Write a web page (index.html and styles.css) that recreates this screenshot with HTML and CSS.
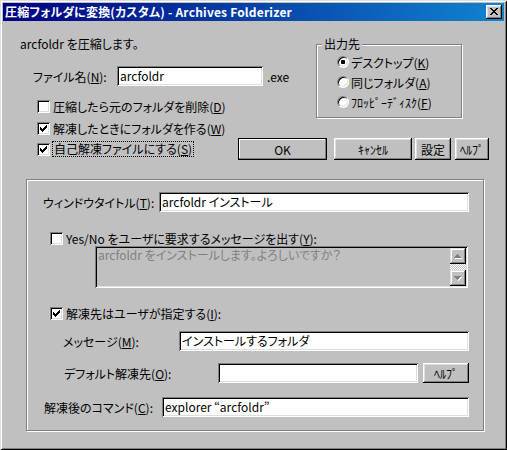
FILE: index.html
```html
<!DOCTYPE html>
<html lang="ja">
<head>
<meta charset="utf-8">
<title>圧縮フォルダに変換(カスタム) - Archives Folderizer</title>
<link rel="stylesheet" href="styles.css">
</head>
<body>
<div class="window">
  <div class="titlebar">
    <span class="title">圧縮フォルダに変換(カスタム) - Archives Folderizer</span>
    <span class="close"><svg width="8" height="7" viewBox="0 0 8 7" shape-rendering="crispEdges"><path fill="#000" d="M0 0h2v1H0zM6 0h2v1H6zM1 1h2v1H1zM5 1h2v1H5zM2 2h4v1H2zM3 3h2v1H3zM2 4h4v1H2zM1 5h2v1H1zM5 5h2v1H5zM0 6h2v1H0zM6 6h2v1H6z"/></svg></span>
  </div>
  <div class="content">
    <div class="top">
      <div class="intro">arcfoldr を圧縮します。</div>
      <div class="filename">
        <span class="fn-label">ファイル名(<u>N</u>):</span>
        <span class="field fn-field">arcfoldr</span>
        <span class="ext">.exe</span>
      </div>
      <fieldset class="dest">
        <legend>出力先</legend>
        <div class="radio-row"><span class="radio on"></span><span>デスクトップ(<u>K</u>)</span></div>
        <div class="radio-row"><span class="radio"></span><span>同じフォルダ(<u>A</u>)</span></div>
        <div class="radio-row"><span class="radio"></span><span>ﾌﾛｯﾋﾟｰﾃﾞｨｽｸ(<u>F</u>)</span></div>
      </fieldset>
      <div class="check cb1"><span class="cbox"></span><span>圧縮したら元のフォルダを削除(<u>D</u>)</span></div>
      <div class="check cb2"><span class="cbox"><svg width="13" height="13" viewBox="0 0 13 13" shape-rendering="crispEdges"><path fill="#000" d="M3 5h1v3H3zM4 6h1v3H4zM5 7h1v3H5zM6 6h1v3H6zM7 5h1v3H7zM8 4h1v3H8zM9 3h1v3H9z"/></svg></span><span>解凍したときにフォルダを作る(<u>W</u>)</span></div>
      <div class="check cb3"><span class="cbox"><svg width="13" height="13" viewBox="0 0 13 13" shape-rendering="crispEdges"><path fill="#000" d="M3 5h1v3H3zM4 6h1v3H4zM5 7h1v3H5zM6 6h1v3H6zM7 5h1v3H7zM8 4h1v3H8zM9 3h1v3H9z"/></svg></span><span class="focus">自己解凍ファイルにする(<u>S</u>)</span></div>
      <div class="buttons">
        <span class="btn default b-ok">OK</span>
        <span class="btn b-cancel">ｷｬﾝｾﾙ</span>
        <span class="btn b-set">設定</span>
        <span class="btn b-help">ﾍﾙﾌﾟ</span>
      </div>
    </div>

    <div class="group">
      <div class="frow r-title">
        <span>ウィンドウタイトル(<u>T</u>):</span>
        <span class="field">arcfoldr インストール</span>
      </div>
      <div class="check cb-yes"><span class="cbox"></span><span>Yes/No をユーザに要求するメッセージを出す(<u>Y</u>):</span></div>
      <div class="memo">
        <div class="memo-text">arcfoldr をインストールします。よろしいですか？</div>
        <div class="vscroll">
          <span class="sbtn"><svg width="8" height="5" viewBox="0 0 8 5" shape-rendering="crispEdges"><path fill="#fff" d="M4 1h1v1H4zM3 2h3v1H3zM2 3h5v1H2zM1 4h7v1H1z"/><path fill="#808080" d="M3 0h1v1H3zM2 1h3v1H2zM1 2h5v1H1zM0 3h7v1H0z"/></svg></span>
          <span class="track"></span>
          <span class="sbtn"><svg width="8" height="5" viewBox="0 0 8 5" shape-rendering="crispEdges"><path fill="#fff" d="M1 1h7v1H1zM2 2h5v1H2zM3 3h3v1H3zM4 4h1v1H4z"/><path fill="#808080" d="M0 0h7v1H0zM1 1h5v1H1zM2 2h3v1H2zM3 3h1v1H3z"/></svg></span>
        </div>
      </div>
      <div class="check cb-dest"><span class="cbox"><svg width="13" height="13" viewBox="0 0 13 13" shape-rendering="crispEdges"><path fill="#000" d="M3 5h1v3H3zM4 6h1v3H4zM5 7h1v3H5zM6 6h1v3H6zM7 5h1v3H7zM8 4h1v3H8zM9 3h1v3H9z"/></svg></span><span>解凍先はユーザが指定する(<u>I</u>):</span></div>
      <div class="frow r-msg">
        <span>メッセージ(<u>M</u>):</span>
        <span class="field">インストールするフォルダ</span>
      </div>
      <div class="frow r-def">
        <span>デフォルト解凍先(<u>O</u>):</span>
        <span class="field def-field"></span>
        <span class="btn b-help2">ﾍﾙﾌﾟ</span>
      </div>
      <div class="frow r-cmd">
        <span>解凍後のコマンド(<u>C</u>):</span>
        <span class="field">explorer “arcfoldr”</span>
      </div>
    </div>
  </div>
</div>
</body>
</html>
```

FILE: styles.css
```css
* { box-sizing: border-box; }
html, body { margin: 0; padding: 0; }
body {
  width: 507px;
  height: 450px;
  background: #c0c0c0;
  font-family: "Noto Sans CJK JP", "Noto Sans", sans-serif;
  font-size: 12px;
  font-feature-settings: "palt";
  color: #000;
  overflow: hidden;
}
u { text-decoration: underline; text-underline-offset: 1px; }

.window {
  width: 507px;
  height: 450px;
  padding: 3px;
  background: #c0c0c0;
  box-shadow: inset 1px 1px #dfdfdf, inset -1px -1px #000, inset 2px 2px #fff, inset -2px -2px #808080;
  display: flex;
  flex-direction: column;
}

.titlebar {
  height: 18px;
  background: linear-gradient(to right, #000080, #1084d0);
  display: flex;
  align-items: center;
  justify-content: space-between;
  padding: 0 2px 0 2px;
}
.title {
  color: #fff;
  font-weight: bold;
  line-height: 18px;
  white-space: nowrap;
  letter-spacing: 0.2px;
}
.close {
  width: 16px;
  height: 14px;
  background: #c0c0c0;
  box-shadow: inset -1px -1px #000, inset 1px 1px #fff, inset -2px -2px #808080, inset 2px 2px #dfdfdf;
  display: flex;
  align-items: center;
  justify-content: center;
  padding-right: 1px;
  padding-bottom: 1px;
}
.close svg { display: block; }

.content {
  padding: 15px 0 0 17px;
}

.top {
  display: grid;
  grid-template-columns: 219px 77px 173px;
  grid-template-rows: 30px 32px 22px 18px 22px;
}
.intro {
  grid-column: 1 / 3;
  grid-row: 1;
  line-height: 16px;
  white-space: nowrap;
}
.filename {
  grid-column: 1 / 3;
  grid-row: 2;
  display: flex;
  align-items: center;
  height: 20px;
  padding-left: 13px;
  white-space: nowrap;
}
.fn-label { width: 84px; }
.fn-field { width: 146px; }
.ext { margin-left: 4px; }

.field {
  height: 20px;
  background: #fff;
  box-shadow: inset 1px 1px #808080, inset -1px -1px #fff, inset 2px 2px #000, inset -2px -2px #dfdfdf;
  padding: 0 3px;
  line-height: 20px;
  white-space: nowrap;
  overflow: hidden;
}

.dest {
  grid-column: 3;
  grid-row: 1 / 5;
  align-self: start;
  margin: 1px 0 0 0;
  width: 146px;
  padding: 1px 0 5px 5px;
  border: 1px solid #808080;
  box-shadow: inset 1px 1px #fff, 1px 1px #fff;
  min-width: 0;
}
.dest legend {
  padding: 0 2px;
  line-height: 14px;
  background: #c0c0c0;
}
.radio-row {
  height: 20px;
  display: flex;
  align-items: center;
  gap: 2px;
  margin-left: 15px;
  white-space: nowrap;
}
.radio {
  width: 12px;
  height: 12px;
  border-radius: 50%;
  background: #fff;
  border: 1px solid;
  border-color: #808080 #fff #fff #808080;
  box-shadow: inset 1px 1px #000, inset -1px -1px #dfdfdf;
  display: flex;
  align-items: center;
  justify-content: center;
  flex: none;
}
.radio.on::after {
  content: "";
  width: 4px;
  height: 4px;
  background: #000;
  border-radius: 1px;
}

.check {
  display: flex;
  align-items: center;
  gap: 3px;
  white-space: nowrap;
}
.cbox {
  width: 13px;
  height: 13px;
  flex: none;
  background: #fff;
  box-shadow: inset 1px 1px #808080, inset -1px -1px #fff, inset 2px 2px #000, inset -2px -2px #dfdfdf;
}
.cbox svg { display: block; }
.cb1, .cb2, .cb3 { padding-left: 17px; }
.cb1 { grid-column: 1 / 3; grid-row: 3; height: 16px; }
.cb2 { grid-column: 1 / 3; grid-row: 4; height: 16px; }
.cb3 { grid-column: 1; grid-row: 5; height: 22px; }
.focus {
  outline: 1px dotted #000;
  outline-offset: 0;
  padding: 0 1px;
  line-height: 14px;
}

.buttons {
  grid-column: 2 / 4;
  grid-row: 5;
  display: flex;
  height: 22px;
}
.btn {
  height: 22px;
  background: #c0c0c0;
  box-shadow: inset -1px -1px #000, inset 1px 1px #fff, inset -2px -2px #808080, inset 2px 2px #dfdfdf;
  display: flex;
  align-items: center;
  justify-content: center;
  white-space: nowrap;
  flex: none;
}
.btn.default {
  border: 1px solid #000;
  box-shadow: inset -1px -1px #808080, inset 1px 1px #fff;
}
.b-ok { width: 89px; margin-left: -1px; }
.b-cancel { width: 78px; margin-left: 7px; }
.b-set { width: 36px; margin-left: 3px; }
.b-help { width: 34px; margin-left: 4px; }

.group {
  margin: 19px 0 0 6px;
  width: 458px;
  height: 252px;
  border: 1px solid #808080;
  box-shadow: inset 1px 1px #fff, 1px 1px #fff;
  padding: 12px 14px 0 0;
  display: flex;
  flex-direction: column;
}
.frow {
  display: grid;
  align-items: center;
  height: 20px;
  white-space: nowrap;
}
.r-title { grid-template-columns: 116px 1fr; padding-left: 16px; }
.r-msg { grid-template-columns: 116px 1fr; padding-left: 36px; margin-top: 10px; }
.r-def { grid-template-columns: 154px 200px 1fr; padding-left: 37px; margin-top: 12px; }
.r-def .btn { height: 20px; margin-left: 5px; }
.r-cmd { grid-template-columns: 118px 1fr; padding-left: 17px; margin-top: 14px; }

.cb-yes { padding-left: 23px; margin-top: 18px; height: 16px; }
.cb-dest { padding-left: 23px; margin-top: 17px; height: 16px; }

.memo {
  margin-left: 68px;
  width: 373px;
  height: 42px;
  display: flex;
  padding: 2px;
  box-shadow: inset 1px 1px #808080, inset -1px -1px #fff, inset 2px 2px #000, inset -2px -2px #dfdfdf;
}
.memo-text {
  flex: 1;
  color: #808080;
  line-height: 14px;
  padding-left: 1px;
  white-space: nowrap;
}
.vscroll {
  width: 16px;
  display: flex;
  flex-direction: column;
}
.sbtn {
  width: 16px;
  height: 16px;
  background: #c0c0c0;
  box-shadow: inset -1px -1px #000, inset 1px 1px #dfdfdf, inset -2px -2px #808080, inset 2px 2px #fff;
  display: flex;
  align-items: center;
  justify-content: center;
  flex: none;
}
.sbtn svg { display: block; }
.track {
  flex: 1;
  background: repeating-conic-gradient(#c0c0c0 0 25%, #fff 0 50%) 0 0 / 2px 2px;
}
```
